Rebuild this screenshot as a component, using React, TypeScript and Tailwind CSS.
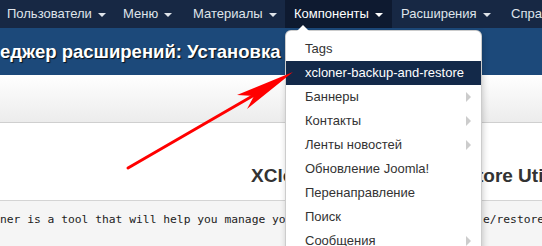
import React from 'react';

const navItems = [
    {label: 'Пользователи', w: 'w-[116px] -ml-[2px]'},
    {label: 'Меню', w: 'w-[70px]'},
    {label: 'Материалы', w: 'w-[101px]'},
    {label: 'Компоненты', w: 'w-[107px]', active: true},
    {label: 'Расширения', w: 'w-[110px]'},
    {label: 'Справка', w: 'w-[90px]'},
];

const menuItems = [
    {label: 'Tags'},
    {label: 'xcloner-backup-and-restore', active: true},
    {label: 'Баннеры', sub: true},
    {label: 'Контакты', sub: true},
    {label: 'Ленты новостей', sub: true},
    {label: 'Обновление Joomla!'},
    {label: 'Перенаправление'},
    {label: 'Поиск'},
    {label: 'Сообщения', sub: true},
];

function Caret() {
    return <span className="ml-[6px] inline-block w-0 h-0 border-l-[4px] border-r-[4px] border-t-[4px] border-l-transparent border-r-transparent border-t-current mt-[2px]"/>;
}

function App() {
    return (
        <div className="relative w-[542px] h-[246px] overflow-hidden bg-white font-['Liberation_Sans',Arial,sans-serif]">
            {/* верхнее меню */}
            <div className="flex h-[28px] bg-[#172844] text-[13px] text-[#dfe4ea] whitespace-nowrap">
                {navItems.map(item => (
                    <div key={item.label}
                         className={`${item.w} shrink-0 flex items-center pl-[9px] ${item.active ? 'bg-[#0e1a30] text-white' : ''}`}>
                        {item.label}
                        <Caret/>
                    </div>
                ))}
            </div>

            {/* заголовок */}
            <div className="h-[47px] bg-[#1c497a] flex items-center">
                <h1 className="text-white font-bold text-[18.5px] whitespace-nowrap [text-shadow:1px_1px_1px_rgba(0,0,0,0.8)]">
                    еджер расширений: Установка
                </h1>
            </div>

            {/* панель инструментов */}
            <div className="h-[48px] bg-gradient-to-b from-white to-[#ececec] border-b border-[#cfcfcf]"/>

            {/* контент */}
            <div className="h-[77px] pl-[251px] pt-[43px] overflow-hidden">
                <h2 className="text-[19px] font-bold text-[#333] whitespace-nowrap leading-none">
                    XCloner Backup and Restore Utility
                </h2>
            </div>
            <div className="h-[46px] bg-[#f5f5f5] border-t border-[#d4d4d4] pt-[11px] whitespace-nowrap overflow-hidden font-['DejaVu_Sans_Mono',monospace] text-[11.3px] text-[#222]">
                ner is a tool that will help you manage your website's backups, generate/restore and move your website
            </div>

            {/* выпадающее меню */}
            <div className="absolute left-[285px] top-[30px] w-[197px] bg-white rounded-[6px] border border-black/20 shadow-[1px_3px_6px_rgba(0,0,0,0.2)] pt-[6px] text-[13px] text-[#333]">
                <span className="absolute -top-[6px] left-[11px] w-0 h-0 border-l-[6px] border-r-[6px] border-b-[6px] border-l-transparent border-r-transparent border-b-white"/>
                {menuItems.map(item => (
                    <div key={item.label}
                         className={`h-[24px] flex items-center pl-[19px] pr-[10px] ${item.active ? 'bg-[#132949] text-white' : ''}`}>
                        <span className="flex-1">{item.label}</span>
                        {item.sub && (
                            <span className="w-0 h-0 border-t-[5px] border-b-[5px] border-l-[5px] border-t-transparent border-b-transparent border-l-[#cccccc]"/>
                        )}
                    </div>
                ))}
            </div>

            {/* красная стрелка */}
            <svg className="absolute left-0 top-0" width="542" height="246" viewBox="0 0 542 246">
                <line x1="128" y1="168" x2="256" y2="94" stroke="#ff0000" strokeWidth="3" strokeLinecap="round"/>
                <polygon points="293,72 237,95 254,96 247,109" fill="#ff0000"/>
            </svg>
        </div>
    );
}

export default App;
